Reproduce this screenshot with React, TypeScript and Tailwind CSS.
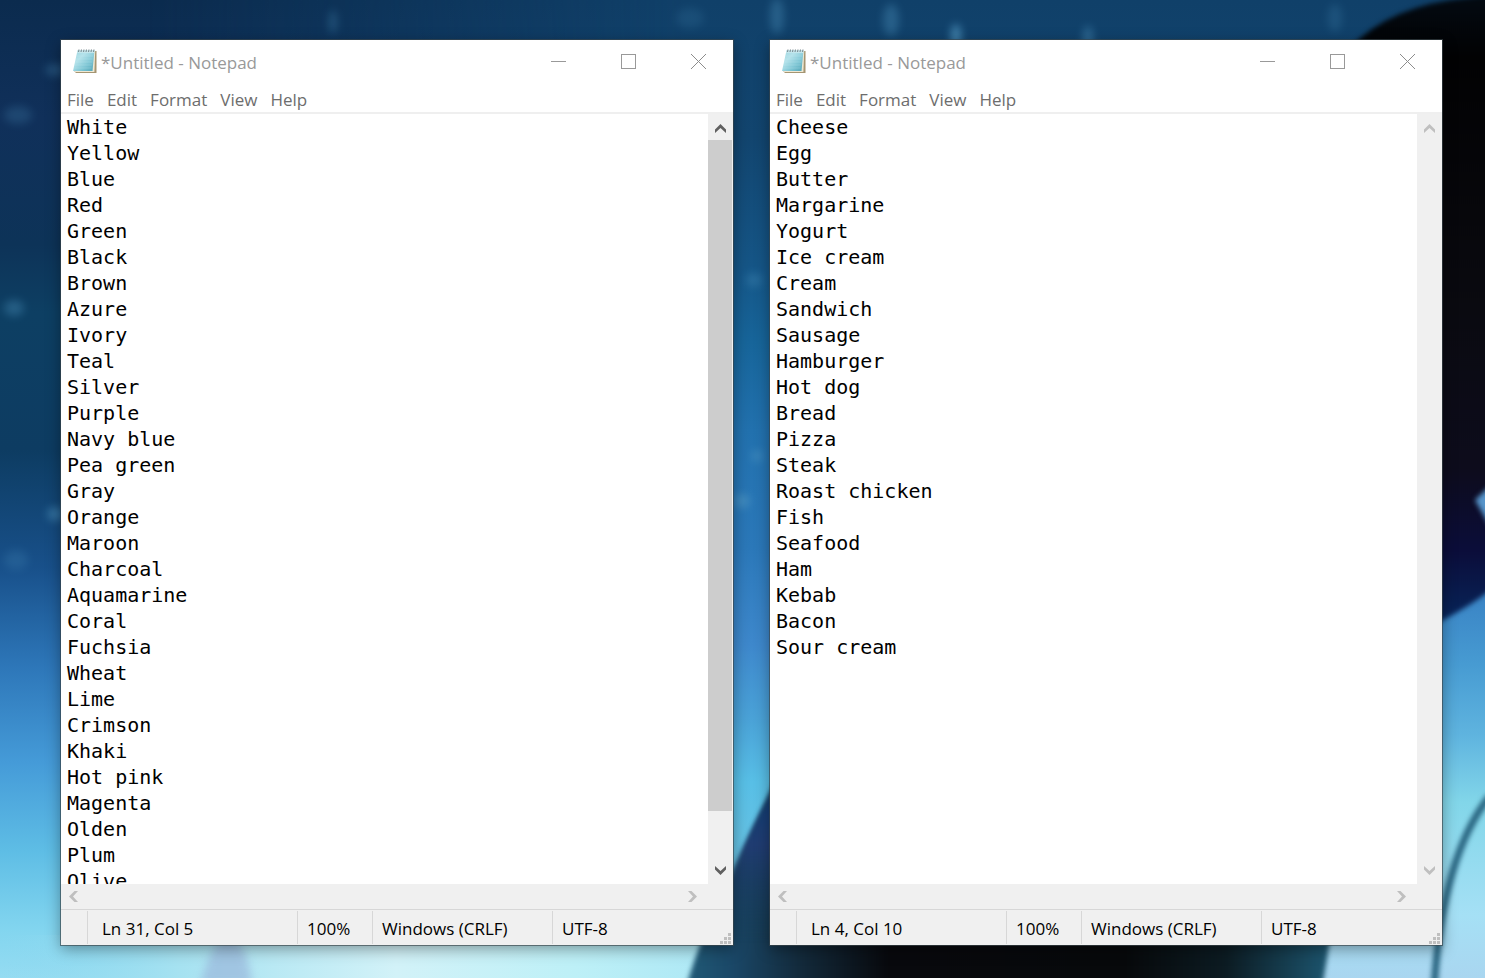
import React, { useId } from "react";

const colors = `White
Yellow
Blue
Red
Green
Black
Brown
Azure
Ivory
Teal
Silver
Purple
Navy blue
Pea green
Gray
Orange
Maroon
Charcoal
Aquamarine
Coral
Fuchsia
Wheat
Lime
Crimson
Khaki
Hot pink
Magenta
Olden
Plum
Olive`;

const foods = `Cheese
Egg
Butter
Margarine
Yogurt
Ice cream
Cream
Sandwich
Sausage
Hamburger
Hot dog
Bread
Pizza
Steak
Roast chicken
Fish
Seafood
Ham
Kebab
Bacon
Sour cream`;

function NotepadIcon() {
  const id = useId();
  return (
    <svg viewBox="0 0 26 26" className="mt-2 h-[26px] w-[26px] shrink-0 self-start" aria-hidden="true">
      <defs>
        <linearGradient id={id} x1="0" y1="0" x2="1" y2="1">
          <stop offset="0" stopColor="#9fd6e0" />
          <stop offset="0.35" stopColor="#b4e2ea" />
          <stop offset="0.65" stopColor="#82c8d6" />
          <stop offset="1" stopColor="#4fa3b6" />
        </linearGradient>
      </defs>
      <path d="M6 3 H24.5 V25 H4 L2.5 23.5 Z" fill="#a59572" />
      <path d="M7 3 H23.2 L22.4 24 H3 Z" fill="#efe8d2" />
      <path d="M5.5 2.5 H22.5 L20.5 23 H1 Z" fill={`url(#${id})`} />
      <path d="M5.5 2.5 H22.5 L22.2 5 H5 Z" fill="#c3e6ec" />
      <path d="M4.5 8 H21 M4 11 H20.6 M3.4 14 H20.2 M2.8 17 H19.8 M2.2 20 H19.4" stroke="#c6e9ef" strokeWidth="0.6" opacity="0.4" />
      <path d="M7 1.5 L6.5 4 M9.5 1.5 L9 4 M12 1.5 L11.5 4 M14.5 1.5 L14 4 M17 1.5 L16.5 4 M19.5 1.5 L19 4 M22 1.5 L21.5 4" stroke="#7d8d92" strokeWidth="1.1" />
    </svg>
  );
}

const chevrons = {
  up: { box: "h-[26px] pt-0.5", path: "M0 9V5.5L5.5 0L11 5.5V9L5.5 4Z" },
  down: { box: "h-[26px] pb-0.5", path: "M0 0V3.5L5.5 9L11 3.5V0L5.5 5Z" },
  left: { box: "h-[25px]", path: "M9 0H5.5L0 5.5L5.5 11H9L4 5.5Z" },
  right: { box: "h-[25px]", path: "M0 0H3.5L9 5.5L3.5 11H0L5 5.5Z" },
};

function ScrollButton({ dir, active }: { dir: keyof typeof chevrons; active?: boolean }) {
  const vertical = dir === "up" || dir === "down";
  const { box, path } = chevrons[dir];
  return (
    <button
      type="button"
      aria-label={`Scroll ${dir}`}
      className={`flex w-[25px] shrink-0 items-center justify-center ${box} ${active ? "text-[#606060]" : "text-[#bfbfbf]"}`}
    >
      <svg width={vertical ? 11 : 9} height={vertical ? 9 : 11} fill="currentColor">
        <path d={path} />
      </svg>
    </button>
  );
}

interface NotepadProps {
  text: string;
  position: string;
  scrollable?: boolean;
}

function Notepad({ text, position, scrollable }: NotepadProps) {
  return (
    <section className="flex min-h-0 min-w-0 flex-col bg-white font-['Open_Sans','Noto_Sans',sans-serif] text-[17px] shadow-[0_0_0_1px_rgba(60,70,75,0.65),0_4px_14px_rgba(0,0,0,0.38)]">
      <header className="flex h-[46px] shrink-0 items-start pl-[11px] text-[#999999]">
        <div className="flex h-[46px] min-w-0 flex-1 items-center gap-[3px]">
          <NotepadIcon />
          <h1 className="truncate">*Untitled - Notepad</h1>
        </div>
        <button type="button" aria-label="Minimize" className="flex h-[43px] w-[70px] items-center justify-center">
          <svg width="15" height="15" shapeRendering="crispEdges">
            <path d="M0 7.5H15" stroke="#999" />
          </svg>
        </button>
        <button type="button" aria-label="Maximize" className="flex h-[43px] w-[70px] items-center justify-center">
          <svg width="15" height="15" shapeRendering="crispEdges">
            <rect x="0.5" y="0.5" width="14" height="14" fill="none" stroke="#999" />
          </svg>
        </button>
        <button type="button" aria-label="Close" className="flex h-[43px] w-[70px] items-center justify-center">
          <svg width="15" height="15">
            <path d="M0 0L15 15M15 0L0 15" stroke="#8c8c8c" />
          </svg>
        </button>
      </header>
      <nav className="flex h-7 shrink-0 items-center gap-[13px] border-b-2 border-[#efefef] pt-0.5 pl-1.5 text-[#6d6d6d]">
        {["File", "Edit", "Format", "View", "Help"].map((item) => (
          <button type="button" key={item}>
            {item}
          </button>
        ))}
      </nav>
      <div className="flex min-h-0 flex-1">
        <textarea
          aria-label="Document text"
          defaultValue={text}
          wrap="off"
          spellCheck={false}
          className="min-w-0 flex-1 resize-none overflow-hidden bg-white pl-1.5 font-['DejaVu_Sans_Mono',monospace] text-[20px] leading-[26px] text-black outline-none"
        />
        <div className="flex w-[25px] shrink-0 flex-col bg-[#f0f0f0]">
          <ScrollButton dir="up" active={scrollable} />
          <div className="flex flex-1 flex-col pr-px">
            {scrollable && <div className="h-[93.5%] bg-[#cdcdcd]" />}
          </div>
          <ScrollButton dir="down" active={scrollable} />
        </div>
      </div>
      <div className="flex h-[26px] shrink-0 justify-between border-b border-[#d7d7d7] bg-[#f0f0f0] pr-[28px]">
        <ScrollButton dir="left" />
        <ScrollButton dir="right" />
      </div>
      <footer className="flex h-[35px] shrink-0 bg-[#f0f0f0] pt-px pb-px text-black">
        <div className="w-[27px] border-r border-[#d7d7d7]" />
        <div className="flex min-w-0 flex-1 items-center border-r border-[#d7d7d7] pt-0.5 pl-3.5 whitespace-nowrap">{position}</div>
        <div className="flex w-[75px] items-center border-r border-[#d7d7d7] pt-0.5 pl-[9px]">100%</div>
        <div className="flex w-[180px] items-center border-r border-[#d7d7d7] pt-0.5 pl-[9px] whitespace-nowrap">Windows (CRLF)</div>
        <div className="flex w-[180px] items-center justify-between pt-0.5 pr-0.5 pl-[9px]">
          <span>UTF-8</span>
          <svg width="11" height="11" className="self-end" fill="#bfbfbf" aria-hidden="true">
            <path d="M8 0h3v3h-3zM4 4h3v3h-3zM8 4h3v3h-3zM0 8h3v3h-3zM4 8h3v3h-3zM8 8h3v3h-3z" />
          </svg>
        </div>
      </footer>
    </section>
  );
}

const sparkles: [number, number, number, number, number][] = [
  [333, 22, 4, 12, 0.3],
  [690, 18, 14, 10, 0.15],
  [777, 16, 7, 18, 0.35],
  [891, 20, 8, 16, 0.35],
  [956, 36, 5, 12, 0.75],
  [1088, 40, 5, 14, 0.45],
  [1335, 18, 7, 14, 0.2],
  [55, 70, 10, 6, 0.3],
  [18, 115, 14, 9, 0.22],
  [14, 308, 10, 8, 0.35],
  [55, 514, 8, 7, 0.5],
  [16, 560, 12, 10, 0.2],
  [754, 280, 8, 7, 0.3],
  [757, 456, 6, 6, 0.45],
  [742, 501, 8, 7, 0.6],
];

function Wallpaper() {
  return (
    <svg className="absolute inset-0 h-full w-full" viewBox="0 0 1485 978" preserveAspectRatio="none" aria-hidden="true">
      <defs>
        <linearGradient id="sky" x1="0" y1="0" x2="0" y2="1">
          <stop offset="0" stopColor="#0b2b4e" />
          <stop offset="0.12" stopColor="#10305a" />
          <stop offset="0.25" stopColor="#0d3358" />
          <stop offset="0.32" stopColor="#0d3f63" />
          <stop offset="0.46" stopColor="#0d3c62" />
          <stop offset="0.58" stopColor="#18508a" />
          <stop offset="0.68" stopColor="#2d76b8" />
          <stop offset="0.78" stopColor="#459bd8" />
          <stop offset="0.87" stopColor="#5ebde5" />
          <stop offset="0.95" stopColor="#82d5ef" />
          <stop offset="1" stopColor="#95dcf2" />
        </linearGradient>
        <linearGradient id="mid" x1="0" y1="0" x2="0" y2="1">
          <stop offset="0" stopColor="#104069" />
          <stop offset="0.14" stopColor="#12456f" />
          <stop offset="0.27" stopColor="#155586" />
          <stop offset="0.35" stopColor="#17659a" />
          <stop offset="0.44" stopColor="#2271ae" />
          <stop offset="0.56" stopColor="#2b78b9" />
          <stop offset="0.66" stopColor="#3e88cc" />
          <stop offset="0.74" stopColor="#4ba4d8" />
          <stop offset="0.8" stopColor="#58bfe6" />
          <stop offset="0.9" stopColor="#6cc3e2" />
          <stop offset="1" stopColor="#a8e6f2" />
        </linearGradient>
        <linearGradient id="right" x1="0" y1="0" x2="0" y2="1">
          <stop offset="0.1" stopColor="#3b86c6" />
          <stop offset="0.25" stopColor="#479bd2" />
          <stop offset="0.42" stopColor="#5fb4df" />
          <stop offset="0.58" stopColor="#82d6e9" />
          <stop offset="0.85" stopColor="#a5e0f5" />
          <stop offset="1" stopColor="#a9d6f0" />
        </linearGradient>
        <linearGradient id="fade" x1="0" y1="0" x2="1" y2="0">
          <stop offset="0.1" stopColor="#fff" stopOpacity="0" />
          <stop offset="0.46" stopColor="#fff" />
        </linearGradient>
        <mask id="mid-mask">
          <rect width="1485" height="978" fill="url(#fade)" />
        </mask>
        <linearGradient id="bottom" x1="0" y1="0" x2="1" y2="0">
          <stop offset="0" stopColor="#8bd8ef" stopOpacity="0" />
          <stop offset="0.25" stopColor="#a6e2f1" />
          <stop offset="0.55" stopColor="#d2f2f8" />
          <stop offset="0.8" stopColor="#bdf0f7" />
          <stop offset="1" stopColor="#ace7f5" />
        </linearGradient>
        <linearGradient id="figure" x1="0" y1="0" x2="1" y2="0">
          <stop offset="0" stopColor="#215a76" />
          <stop offset="0.07" stopColor="#1a4767" />
          <stop offset="0.17" stopColor="#132a3b" />
          <stop offset="0.3" stopColor="#08090d" />
          <stop offset="0.65" stopColor="#07090b" />
          <stop offset="0.8" stopColor="#0c1b22" />
          <stop offset="0.94" stopColor="#1b5068" />
          <stop offset="1" stopColor="#1f607c" />
        </linearGradient>
        <linearGradient id="edge" x1="0" y1="0" x2="0" y2="1">
          <stop offset="0" stopColor="#0b3f78" />
          <stop offset="0.45" stopColor="#203c71" />
          <stop offset="1" stopColor="#143c57" stopOpacity="0" />
        </linearGradient>
        <linearGradient id="hair" x1="0" y1="0" x2="0" y2="1">
          <stop offset="0" stopColor="#030a12" />
          <stop offset="0.1" stopColor="#020203" />
          <stop offset="0.5" stopColor="#0a0a10" />
          <stop offset="0.75" stopColor="#0d0c1c" />
          <stop offset="0.88" stopColor="#0b0d3a" />
          <stop offset="1" stopColor="#07275c" />
        </linearGradient>
        <filter id="soft" x="-20%" y="-20%" width="140%" height="140%" colorInterpolationFilters="sRGB">
          <feGaussianBlur stdDeviation="2.5" />
        </filter>
        <filter id="glow" x="-100%" y="-100%" width="300%" height="300%" colorInterpolationFilters="sRGB">
          <feGaussianBlur stdDeviation="4" />
        </filter>
      </defs>
      <rect width="1485" height="978" fill="url(#sky)" />
      <rect width="1485" height="978" fill="url(#mid)" mask="url(#mid-mask)" />
      <rect y="935" width="720" height="43" fill="url(#bottom)" />
      <path d="M200 985 Q214 935 230 935 Q248 945 252 985 Z" fill="#9ab8dc" opacity="0.7" filter="url(#glow)" />
      <rect x="1300" y="560" width="185" height="418" fill="url(#right)" />
      <path d="M686 988 Q700 935 738 862 Q758 818 785 760 H1360 L1322 988 Z" fill="url(#figure)" filter="url(#soft)" />
      <path d="M734 870 Q755 818 785 770 V940 H725 Z" fill="url(#edge)" filter="url(#soft)" />
      <path d="M1340 60 Q1375 12 1450 0 L1495 -6 V586 Q1475 604 1430 627 H1380 Z" fill="url(#hair)" filter="url(#soft)" />
      <path d="M1475 500 L1492 484 V530 Z" fill="#5795cb" filter="url(#soft)" />
      <path d="M1490 796 Q1442 855 1434 990" fill="none" stroke="#27637f" strokeWidth="7" filter="url(#soft)" />
      {sparkles.map(([x, y, rx, ry, opacity]) => (
        <ellipse key={`${x}-${y}`} cx={x} cy={y} rx={rx} ry={ry} fill="#5299c4" opacity={opacity} filter="url(#glow)" />
      ))}
    </svg>
  );
}

export default function App() {
  return (
    <div className="relative h-screen min-h-80 overflow-hidden bg-[#0c2c50]">
      <Wallpaper />
      <main className="relative grid h-full grid-cols-2 grid-rows-1 gap-[37px] pt-10 pr-[43px] pb-[33px] pl-[61px]">
        <Notepad text={colors} position="Ln 31, Col 5" scrollable />
        <Notepad text={foods} position="Ln 4, Col 10" />
      </main>
    </div>
  );
}
